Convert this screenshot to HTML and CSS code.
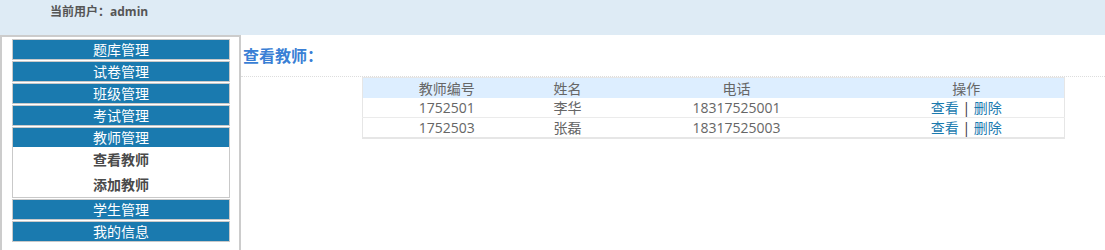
FILE: index.html
```html
<!DOCTYPE html>
<html lang="zh-CN">
<head>
  <meta charset="UTF-8">
  <title>教师管理</title>
  <link rel="stylesheet" href="styles.css">
</head>
<body>
  <div class="top-bar">当前用户：admin</div>
  <div class="layout">
    <div class="side-menu">
      <div class="menu-group"><div class="menu-title">题库管理</div></div>
      <div class="menu-group"><div class="menu-title">试卷管理</div></div>
      <div class="menu-group"><div class="menu-title">班级管理</div></div>
      <div class="menu-group"><div class="menu-title">考试管理</div></div>
      <div class="menu-group">
        <div class="menu-title">教师管理</div>
        <a class="menu-item" href="#">查看教师</a>
        <a class="menu-item" href="#">添加教师</a>
      </div>
      <div class="menu-group"><div class="menu-title">学生管理</div></div>
      <div class="menu-group"><div class="menu-title">我的信息</div></div>
    </div>
    <div class="main">
      <h3 class="page-title">查看教师：</h3>
      <table class="data-table">
        <colgroup>
          <col style="width:168px">
          <col style="width:74px">
          <col style="width:264px">
          <col style="width:196px">
        </colgroup>
        <thead>
          <tr><th>教师编号</th><th>姓名</th><th>电话</th><th>操作</th></tr>
        </thead>
        <tbody>
          <tr>
            <td>1752501</td><td>李华</td><td>18317525001</td>
            <td><a href="#">查看</a> <span class="sep">|</span> <a href="#">删除</a></td>
          </tr>
          <tr>
            <td>1752503</td><td>张磊</td><td>18317525003</td>
            <td><a href="#">查看</a> <span class="sep">|</span> <a href="#">删除</a></td>
          </tr>
        </tbody>
      </table>
    </div>
  </div>
</body>
</html>
```

FILE: styles.css
```css
:root {
  --menu-blue: #1a7aaf;
  --head-bg: #deebf5;
  --line-gray: #cccccc;
  --text-gray: #666;
}

body {
  margin: 0;
  font-family: 'Open Sans', 'Noto Sans CJK SC', sans-serif;
  font-size: 14px;
  color: var(--text-gray);
  background: #fff;
}

.top-bar {
  height: 35px;
  line-height: 24px;
  padding-left: 50px;
  background: var(--head-bg);
  font-size: 12px;
  font-weight: bold;
  color: #555;
}

.layout {
  display: flex;
  height: 215px;
}

.side-menu {
  width: 237px;
  flex-shrink: 0;
  border: 2px solid var(--line-gray);
  border-bottom: none;
  padding-top: 2px;
}

.menu-group {
  width: 216px;
  margin: 0 0 1px 10px;
  border: 1px solid #c9c9c9;
}

.menu-title {
  height: 19px;
  line-height: 19px;
  background: var(--menu-blue);
  color: #fff;
  text-align: center;
}

.menu-item {
  display: block;
  height: 25px;
  line-height: 25px;
  text-align: center;
  color: #4a4a4a;
  font-weight: bold;
  text-decoration: none;
}

.main {
  flex: 1;
}

.page-title {
  margin: 0;
  height: 39px;
  line-height: 39px;
  padding: 2px 0 0 2px;
  font-size: 16px;
  color: #3a7fd5;
  border-bottom: 1px dotted #ddd;
}

.data-table {
  margin-left: 121px;
  width: 702px;
  table-layout: fixed;
  border-collapse: collapse;
  border: 1px solid #e6e6e6;
  border-bottom-width: 2px;
}

.data-table th,
.data-table td {
  padding: 0;
  text-align: center;
  font-weight: normal;
  line-height: 19px;
  height: 19px;
}

.data-table th {
  height: 20px;
  background: #ddeeff;
}

.data-table tbody tr {
  border-top: 1px solid #ebebeb;
}

.data-table tbody tr:first-child {
  border-top: none;
}

.data-table a {
  color: var(--menu-blue);
  text-decoration: none;
}

.data-table .sep {
  color: #333;
}
```
